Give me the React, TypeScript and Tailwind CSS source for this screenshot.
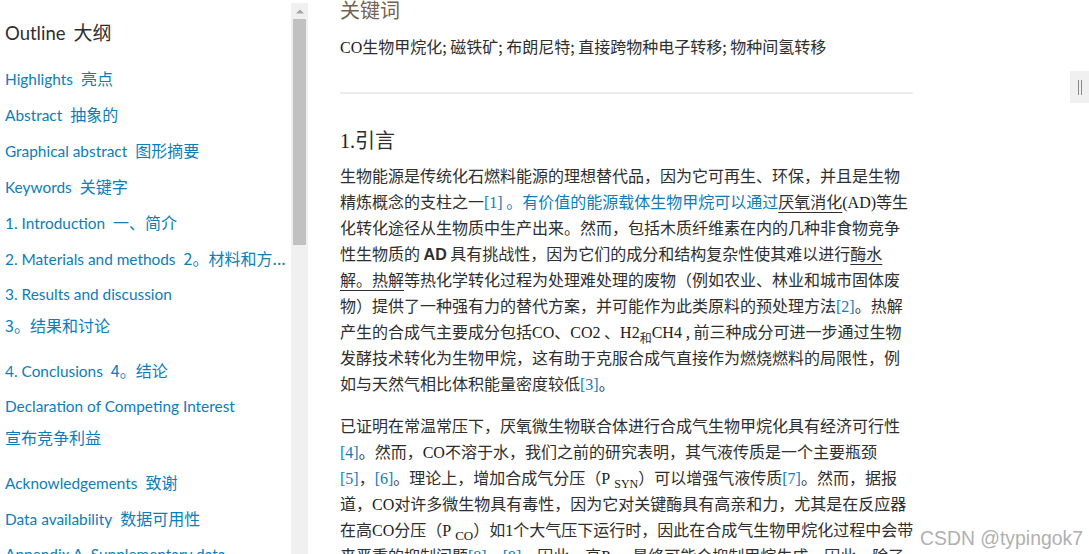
import React from "react";

const BLUE = "text-[#0c7dbb]";

const Serif = ({ children, className = "" }: { children: React.ReactNode; className?: string }) => (
  <span className={`font-['Liberation_Serif',serif] text-[#1a1a1a] ${className}`}>{children}</span>
);

const Cite = ({ n }: { n: string }) => (
  <span className={`font-['Liberation_Serif',serif] ${BLUE}`}>[{n}]</span>
);

const U = ({ children }: { children: React.ReactNode }) => (
  <span className="underline decoration-1 underline-offset-[4px]">{children}</span>
);

type NavItem = { en?: string; zh?: string; wrapZh?: string };

const navItems: NavItem[] = [
  { en: "Highlights", zh: "亮点" },
  { en: "Abstract", zh: "抽象的" },
  { en: "Graphical abstract", zh: "图形摘要" },
  { en: "Keywords", zh: "关键字" },
  { en: "1. Introduction", zh: "一、简介" },
  { en: "2. Materials and methods", zh: "2。材料和方..." },
  { en: "3. Results and discussion", wrapZh: "3。结果和讨论" },
  { en: "4. Conclusions", zh: "4。结论" },
  { en: "Declaration of Competing Interest", wrapZh: "宣布竞争利益" },
  { en: "Acknowledgements", zh: "致谢" },
  { en: "Data availability", zh: "数据可用性" },
  { en: "Appendix A. Supplementary data" },
];

function Sidebar() {
  return (
    <div className="w-[291px] shrink-0 pl-[5px] pt-[14px] font-['Lato','Noto_Sans_CJK_SC',sans-serif]">
      <div className="h-[36px] leading-[36px] text-[#2e2e2e] whitespace-nowrap">
        <span className="text-[18.5px]">Outline</span>
        <span className="ml-[8px] text-[19px] font-['Noto_Sans_CJK_SC',sans-serif]">大纲</span>
      </div>
      <div className="h-[10px]" />
      {navItems.map((it, i) =>
        it.wrapZh ? (
          <div key={i} className={`h-[76px] ${BLUE}`}>
            <div className="h-[36px] leading-[36px] text-[15.4px] whitespace-nowrap">{it.en}</div>
            <div className="h-[26px] leading-[26px] text-[16px] font-['Noto_Sans_CJK_SC',sans-serif] whitespace-nowrap">
              {it.wrapZh}
            </div>
          </div>
        ) : (
          <div key={i} className={`h-[36px] leading-[36px] whitespace-nowrap overflow-hidden ${BLUE}`}>
            <span className="text-[15.4px]">{it.en}</span>
            {it.zh && (
              <span className="ml-[8px] text-[16px] font-['Noto_Sans_CJK_SC',sans-serif]">{it.zh}</span>
            )}
          </div>
        )
      )}
    </div>
  );
}

function Scrollbar() {
  return (
    <div className="w-[17px] shrink-0 pt-[3px] flex flex-col">
      <div className="flex-1 bg-[#f0f0f0] flex flex-col items-center">
        <div className="h-[16px] w-full flex items-center justify-center">
          <svg width="8" height="5" viewBox="0 0 8 5">
            <path d="M0 4.5 L4 0.5 L8 4.5 Z" fill="#a3a3a3" />
          </svg>
        </div>
        <div className="w-[13px] h-[226px] bg-[#c1c1c1]" />
      </div>
    </div>
  );
}

const Line = ({ children }: { children: React.ReactNode }) => (
  <div className="h-[26px] leading-[26px] whitespace-nowrap">{children}</div>
);

function Main() {
  return (
    <div className="relative flex-1 pl-[32px]">
      <div className="w-[573px] text-[#2e2e2e] font-['Noto_Sans_CJK_SC',sans-serif]">
        <div className="h-[20px] leading-[20px] text-[20px] text-[#74624f]">关键词</div>
        <div className="mt-[13px] h-[26px] leading-[26px] text-[16px] whitespace-nowrap">
          <Serif>CO</Serif>生物甲烷化; 磁铁矿; 布朗尼特; 直接跨物种电子转移; 物种间氢转移
        </div>
        <div className="mt-[33px] h-[2px] bg-[#ededed]" />
        <div className="mt-[31px] h-[30px] leading-[30px] text-[20px]">
          <Serif>1.</Serif>引言
        </div>
        <div className="mt-[7px] text-[16px]">
          <Line>生物能源是传统化石燃料能源的理想替代品，因为它可再生、环保，并且是生物</Line>
          <Line>
            精炼概念的支柱之一<Cite n="1" />
            <span className={BLUE}> 。有价值的能源载体生物甲烷可以通过</span>
            <U>厌氧消化</U>
            <Serif>(AD)</Serif>等生
          </Line>
          <Line>化转化途径从生物质中生产出来。然而，包括木质纤维素在内的几种非食物竞争</Line>
          <Line>
            性生物质的 <span className="font-['Liberation_Sans',sans-serif] font-bold">AD</span> 具有挑战性，因为它们的成分和结构复杂性使其难以进行<U>酶水</U>
          </Line>
          <Line>
            <U>解。热解</U>等热化学转化过程为处理难处理的废物（例如农业、林业和城市固体废
          </Line>
          <Line>
            物）提供了一种强有力的替代方案，并可能作为此类原料的预处理方法<Cite n="2" />。热解
          </Line>
          <Line>
            产生的合成气主要成分包括<Serif>CO</Serif>、<Serif>CO2</Serif> 、<Serif>H2</Serif>
            <span className="text-[12px] relative top-[5px]">和</span>
            <Serif>CH4</Serif> , 前三种成分可进一步通过生物
          </Line>
          <Line>发酵技术转化为生物甲烷，这有助于克服合成气直接作为燃烧燃料的局限性，例</Line>
          <Line>
            如与天然气相比体积能量密度较低<Cite n="3" />。
          </Line>
        </div>
        <div className="mt-[16px] text-[16px]">
          <Line>已证明在常温常压下，厌氧微生物联合体进行合成气生物甲烷化具有经济可行性</Line>
          <Line>
            <Cite n="4" />。然而，<Serif>CO</Serif>不溶于水，我们之前的研究表明，其气液传质是一个主要瓶颈
          </Line>
          <Line>
            <Cite n="5" />，<Cite n="6" />。理论上，增加合成气分压（<Serif>P</Serif>
            <Serif className="ml-[4px] text-[12px] relative top-[4px]">SYN</Serif>）可以增强气液传质<Cite n="7" />。然而，据报
          </Line>
          <Line>
            道，<Serif>CO</Serif>对许多微生物具有毒性，因为它对关键酶具有高亲和力，尤其是在反应器
          </Line>
          <Line>
            在高<Serif>CO</Serif>分压（<Serif>P</Serif>
            <Serif className="ml-[4px] text-[13px] relative top-[4px]">CO</Serif>）如<Serif>1</Serif>个大气压下运行时，因此在合成气生物甲烷化过程中会带
          </Line>
          <Line>
            来严重的抑制问题<Cite n="8" />，<Cite n="9" />。因此，高<Serif>P</Serif>
            <Serif className="ml-[4px] text-[13px] relative top-[4px]">CO</Serif>最终可能会抑制甲烷生成。因此，除了
          </Line>
        </div>
      </div>
      <div className="absolute right-0 top-[71px] w-[19px] h-[32px] bg-[#f0f0f0] flex items-center justify-center gap-[2px]">
        <div className="w-px h-[15px] bg-[#8a8a8a]" />
        <div className="w-px h-[15px] bg-[#8a8a8a]" />
      </div>
      <div className="absolute right-[6px] bottom-[5px] text-[19.4px] leading-[22px] text-[#b0b0b0] font-['Liberation_Sans',sans-serif] whitespace-nowrap">
        CSDN @typingok7
      </div>
    </div>
  );
}

export default function App() {
  return (
    <div className="flex w-[1089px] h-[554px] overflow-hidden bg-white">
      <Sidebar />
      <Scrollbar />
      <Main />
    </div>
  );
}
